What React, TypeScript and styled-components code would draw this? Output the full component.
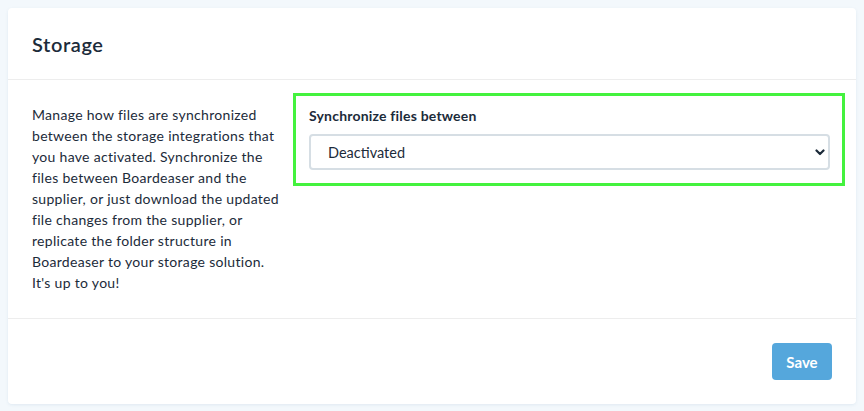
import React, { useState } from 'react';
import styled, { createGlobalStyle } from 'styled-components';

const GlobalStyle = createGlobalStyle`
  html, body {
    margin: 0;
    padding: 0;
    background: #f3f8fc;
    font-family: Lato, "Open Sans", sans-serif;
    color: #1c2b3a;
  }
  * { box-sizing: border-box; }
`;

const options = [
  { value: 'deactivated', label: 'Deactivated' },
  { value: 'sync', label: 'Synchronize both ways' },
  { value: 'download', label: 'Download from supplier' },
  { value: 'replicate', label: 'Replicate folder structure' },
];

const Chevron = () => (
  <svg width="10" height="7" viewBox="0 0 10 7" fill="none">
    <path d="M1.5 1.5 L5 5 L8.5 1.5" stroke="#1c2b3a" strokeWidth="2.2" strokeLinecap="round" strokeLinejoin="round" />
  </svg>
);

export default function App() {
  const [sync, setSync] = useState(options[0].value);

  return (
    <Page>
      <GlobalStyle />
      <Card>
        <Header>
          <Title>Storage</Title>
        </Header>
        <Body>
          <Description>
            Manage how files are synchronized between the storage integrations that
            you have activated. Synchronize the files between Boardeaser and the
            supplier, or just download the updated file changes from the supplier, or
            replicate the folder structure in Boardeaser to your storage solution.
            It's up to you!
          </Description>
          <FormGroup>
            <Label htmlFor="sync">Synchronize files between</Label>
            <SelectWrapper>
              <Select id="sync" value={sync} onChange={(e) => setSync(e.target.value)}>
                {options.map((o) => (
                  <option key={o.value} value={o.value}>{o.label}</option>
                ))}
              </Select>
              <SelectIcon><Chevron /></SelectIcon>
            </SelectWrapper>
          </FormGroup>
        </Body>
        <Footer>
          <SaveButton>Save</SaveButton>
        </Footer>
      </Card>
    </Page>
  );
}

const Page = styled.div`
  padding: 8px;
  min-height: 411px;
`;
const Card = styled.div`
  background: #ffffff;
  border-radius: 4px;
  box-shadow: 0 1px 3px rgba(90, 130, 170, 0.12);
  width: 848px;
`;
const Header = styled.div`
  height: 72px;
  padding: 0 24px;
  display: flex;
  align-items: center;
  border-bottom: 1px solid #ededed;
`;
const Title = styled.h2`
  margin: 0;
  font-size: 20px;
  font-weight: 600;
  letter-spacing: 0.6px;
`;
const Body = styled.div`
  display: grid;
  grid-template-columns: 253px 1fr;
  gap: 8px;
  align-items: start;
  padding: 13px 11px 25px 24px;
  border-bottom: 1px solid #ededed;
`;
const Description = styled.p`
  margin: 0;
  padding-top: 11px;
  font-size: 14px;
  line-height: 21px;
  letter-spacing: 0.3px;
`;
const FormGroup = styled.div`
  display: flex;
  flex-direction: column;
  gap: 8px;
  border: 3px solid #44f23e;
  padding: 10px 12px 13px 13px;
`;
const Label = styled.label`
  font-size: 14px;
  line-height: 20px;
  font-weight: 700;
  letter-spacing: 0.2px;
`;
const SelectWrapper = styled.div`
  position: relative;
`;
const Select = styled.select`
  appearance: none;
  width: 100%;
  height: 36px;
  padding: 0 32px 0 17px;
  border: 2px solid #d6dee4;
  border-radius: 4px;
  background: #ffffff;
  font-family: inherit;
  font-size: 14.5px;
  color: #1c2b3a;
`;
const SelectIcon = styled.span`
  position: absolute;
  right: 5px;
  top: 15px;
  display: inline-flex;
  pointer-events: none;
`;
const Footer = styled.div`
  display: flex;
  justify-content: flex-end;
  padding: 24px;
`;
const SaveButton = styled.button`
  width: 60px;
  height: 37px;
  border: none;
  border-radius: 4px;
  background: #55a7dc;
  color: #ffffff;
  font-family: inherit;
  font-size: 15px;
  font-weight: 700;
`;
